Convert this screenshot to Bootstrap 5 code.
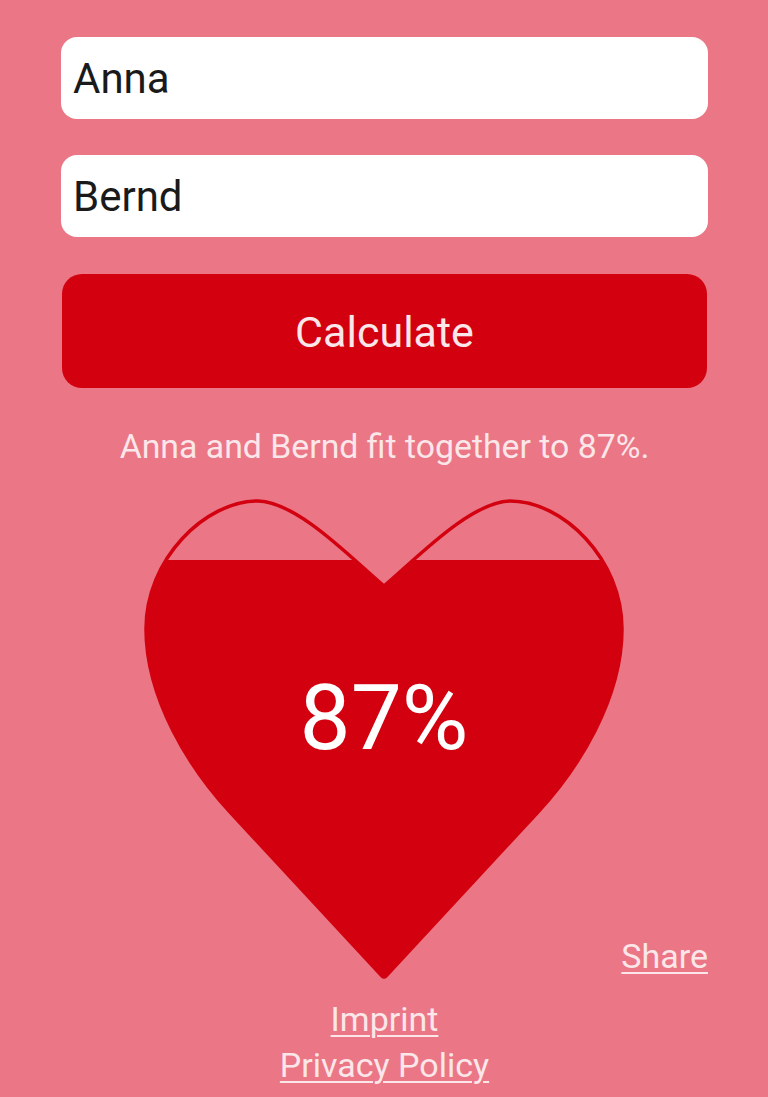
<!DOCTYPE html>
<html lang="en">
<head>
<meta charset="utf-8">
<title>Love Calculator</title>
<link href="https://cdn.jsdelivr.net/npm/bootstrap@5.3.0/dist/css/bootstrap.min.css" rel="stylesheet">
<style>
html,body{height:100%;overflow:hidden}
body{background:#ea7686;font-family:Roboto,"Liberation Sans",sans-serif;color:#fbe6e9}
.app-wrap{padding:37px 60px 0 61px}
.name-field.form-control{height:82px;border:0;border-radius:16px;font-size:42px;padding:1px 12px 0;color:#1a1a1a;background:#fff;font-family:Roboto,sans-serif;margin-bottom:36px;box-shadow:none}
.calc-btn.btn{height:114px;width:calc(100% - 2px);background:#d3000f;border:0;border-radius:20px;color:#fbe6e9;font-size:43px;padding:3px 0 0;margin:1px 1px 0}
.result-line{font-size:33.8px;line-height:36px;margin:41px 0 34px;text-align:center}
.heart-row{display:grid;grid-template-columns:83px 480px 84px;align-items:end}
.heart-svg{display:block;width:480px;height:480px}
.pct-text{font-family:Roboto,sans-serif;font-size:91px;fill:#fff;text-anchor:middle}
.page-link-x{color:#fbe6e9;font-size:34px;line-height:46px;text-decoration:underline;text-underline-offset:4px;text-decoration-thickness:2px}
.share-link{justify-self:end;white-space:nowrap}
.foot-links{margin-top:17px}
</style>
</head>
<body>
<div class="app-wrap">
  <input class="form-control name-field" type="text" value="Anna" aria-label="First name">
  <input class="form-control name-field" type="text" value="Bernd" aria-label="Second name">
  <button class="btn calc-btn" type="button">Calculate</button>
  <p class="result-line">Anna and Bernd fit together to 87%.</p>
  <div class="heart-row">
    <span></span>
    <svg class="heart-svg" viewBox="144 500 480 480" xmlns="http://www.w3.org/2000/svg" role="img" aria-label="Heart filled to 87%">
      <defs>
        <path id="heartShape" d="M384 587C352 560 298 503 258 502C205 502 146 560 146 630C146 700 190 770 230 813L382 977Q384 979 386 977L538 813C578 770 622 700 622 630C622 560 563 502 510 502C470 503 416 560 384 587Z"/>
        <clipPath id="fillClip"><rect x="140" y="561" width="490" height="425"/></clipPath>
      </defs>
      <use href="#heartShape" fill="none" stroke="#d3000f" stroke-width="3.5"/>
      <use href="#heartShape" fill="#d3000f" clip-path="url(#fillClip)"/>
      <text class="pct-text" x="384" y="750">87%</text>
    </svg>
    <a class="page-link-x share-link" href="#">Share</a>
  </div>
  <div class="foot-links d-flex flex-column align-items-center">
    <a class="page-link-x" href="#">Imprint</a>
    <a class="page-link-x" href="#">Privacy Policy</a>
  </div>
</div>
</body>
</html>
